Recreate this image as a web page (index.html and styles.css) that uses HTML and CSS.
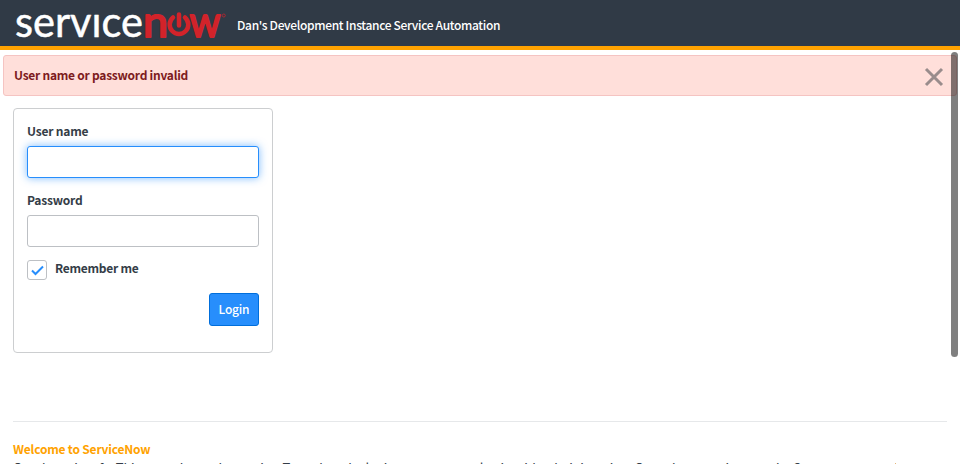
FILE: index.html
```html
<!DOCTYPE html>
<html lang="en">
<head>
<meta charset="utf-8">
<title>ServiceNow</title>
<link rel="stylesheet" href="styles.css">
</head>
<body>
<header class="banner">
  <svg class="logo" width="214" height="46" viewBox="0 0 214 46" role="img" aria-label="servicenow">
    <text class="logo-service" x="0" y="36.800" textLength="128" lengthAdjust="spacingAndGlyphs">servıce</text>
    <text class="logo-now" x="128" y="36.500" textLength="25" lengthAdjust="spacingAndGlyphs">n</text>
    <path class="logo-power" d="M158 17.500a9.300 9.300 0 1 0 12 0M164 14.500v11"/>
    <text class="logo-now" x="174.500" y="36.500" textLength="31" lengthAdjust="spacingAndGlyphs">w</text>
    <circle class="logo-mark" cx="208.800" cy="15.500" r="1.500"/>
  </svg>
  <span class="tagline">Dan's Development Instance Service Automation</span>
</header>
<main class="page">
  <div class="alert"><span>User name or password invalid</span>
    <svg class="close" width="20" height="20" viewBox="0 0 20 20"><path d="M2 2l16 16M18 2L2 18"/></svg>
  </div>
  <form class="login">
    <label class="label" for="user">User name</label>
    <input class="field focused" id="user" type="text">
    <label class="label" for="pass">Password</label>
    <input class="field" id="pass" type="password">
    <div class="remember"><span class="check"><svg width="18" height="18" viewBox="0 0 18 18"><path d="M4 9.500l3.500 3.500L15 5.500"/></svg></span><span>Remember me</span></div>
    <button class="submit" type="button">Login</button>
  </form>
  <section class="welcome">
    <h2>Welcome to ServiceNow</h2>
    <p>Our demo is safe. This page shows the service. To update the login page content, log in with administration. Once there, navigate to the System menu and the dashboard</p>
  </section>
  <div class="scrollbar"></div>
</main>
</body>
</html>
```
FILE: styles.css
```css
* { box-sizing: border-box; }
body { margin: 0; height: 464px; overflow: hidden; background: #fff; color: #343d47; font: 13px/18px "Noto Sans CJK SC", "Open Sans", sans-serif; }
.banner { display: flex; height: 50px; padding-left: 15px; background: #303a46; border-bottom: 4px solid #ffa200; }
.logo { flex: none; }
.logo text { font-family: Lato, sans-serif; font-size: 43px; stroke-linejoin: round; }
.logo-service { fill: #fff; stroke: #fff; stroke-width: .5; }
.logo-now { fill: #d2232a; stroke: #d2232a; stroke-width: 2; }
.logo-power { fill: none; stroke: #d2232a; stroke-width: 4.500; stroke-linecap: round; }
.logo-mark { fill: none; stroke: #d2232a; stroke-width: .7; }
.tagline { margin: 16px 0 0 8px; color: #fff; font-size: 12px; font-weight: 500; letter-spacing: -.33px; white-space: nowrap; }
.page { position: relative; height: 414px; padding: 5px 3px 0; overflow: hidden; }
.alert { display: flex; align-items: center; justify-content: space-between; height: 41px; padding: 0 12px 2px 10px; border: 1px solid #f5c4c2; border-radius: 3px; background: #ffdfda; color: #7d1b20; font-weight: 700; font-size: 12px; letter-spacing: -.25px; }
.close { margin: 5px 0 0; fill: none; stroke: #998c8c; stroke-width: 3; }
.login { display: flex; flex-direction: column; width: 260px; height: 245px; margin: 12px 0 0 10px; padding: 13px 13px 0; border: 1px solid #ccced0; border-radius: 4px; }
.label { height: 18px; margin-bottom: 6px; font-weight: 700; font-size: 12px; letter-spacing: -.2px; }
.field { width: 232px; height: 32px; margin: 0 0 13px; border: 1px solid #bdc0c4; border-radius: 3px; outline: none; }
.focused { border-color: #278efc; box-shadow: 0 0 8px rgba(39,142,252,.6); }
.remember { display: flex; gap: 8px; height: 20px; font-weight: 700; font-size: 12px; line-height: 15px; letter-spacing: -.25px; }
.check { width: 20px; height: 20px; border: 1px solid #bdc0c4; border-radius: 3px; }
.check svg { display: block; fill: none; stroke: #278efc; stroke-width: 2; }
.submit { align-self: flex-end; width: 50px; height: 33px; margin-top: 13px; padding: 0 0 2px; border: 1px solid #006edb; border-radius: 3px; background: #278efc; color: #fff; font: 500 12px "Noto Sans CJK SC", sans-serif; letter-spacing: -.2px; }
.welcome { margin: 68px 10px 0; padding-top: 18px; border-top: 1px solid #e6e8ea; white-space: nowrap; }
.welcome h2 { margin: 0; color: #ffa200; font-size: 12px; font-weight: 700; line-height: 18px; letter-spacing: -.2px; }
.welcome p { width: 883px; margin: 1px 0 0; overflow: hidden; font-size: 13px; line-height: 18px; letter-spacing: -.25px; }
.scrollbar { position: absolute; top: 2px; right: 2px; width: 7px; height: 305px; border-radius: 4px; background: rgba(0,0,0,.5); }
```
